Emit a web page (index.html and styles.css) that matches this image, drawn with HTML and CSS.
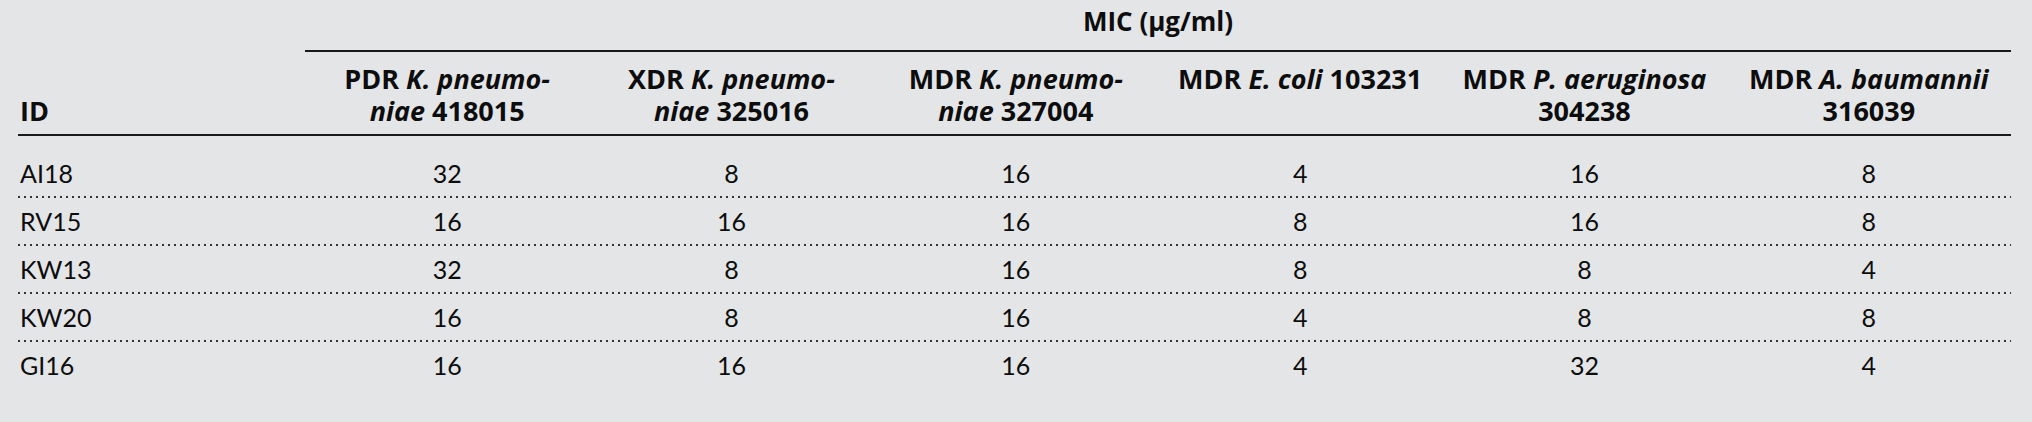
FILE: index.html
```html
<!DOCTYPE html>
<html>
  <head>
    <title>MIC table</title>
    <meta charset="utf-8">
    <link rel="stylesheet" href="styles.css">
  </head>
  <body>
  <div id="mictable">
    <div class="row head-top">
      <div class="cell"></div>
      <div class="cell span-title">MIC (μg/ml)</div>
    </div>
    <div class="row head-cols">
      <div class="cell id-head">ID</div>
      <div class="cell col-head">PDR <i>K. pneumo-</i><br><i>niae</i> 418015</div>
      <div class="cell col-head">XDR <i>K. pneumo-</i><br><i>niae</i> 325016</div>
      <div class="cell col-head">MDR <i>K. pneumo-</i><br><i>niae</i> 327004</div>
      <div class="cell col-head">MDR <i>E. coli</i> 103231</div>
      <div class="cell col-head">MDR <i>P. aeruginosa</i><br>304238</div>
      <div class="cell col-head">MDR <i>A. baumannii</i><br>316039</div>
    </div>
    <div class="body-rows">
      <div class="row data dotted">
        <div class="cell id">AI18</div>
        <div class="cell">32</div><div class="cell">8</div><div class="cell">16</div>
        <div class="cell">4</div><div class="cell">16</div><div class="cell">8</div>
      </div>
      <div class="row data dotted">
        <div class="cell id">RV15</div>
        <div class="cell">16</div><div class="cell">16</div><div class="cell">16</div>
        <div class="cell">8</div><div class="cell">16</div><div class="cell">8</div>
      </div>
      <div class="row data dotted">
        <div class="cell id">KW13</div>
        <div class="cell">32</div><div class="cell">8</div><div class="cell">16</div>
        <div class="cell">8</div><div class="cell">8</div><div class="cell">4</div>
      </div>
      <div class="row data dotted">
        <div class="cell id">KW20</div>
        <div class="cell">16</div><div class="cell">8</div><div class="cell">16</div>
        <div class="cell">4</div><div class="cell">8</div><div class="cell">8</div>
      </div>
      <div class="row data">
        <div class="cell id">GI16</div>
        <div class="cell">16</div><div class="cell">16</div><div class="cell">16</div>
        <div class="cell">4</div><div class="cell">32</div><div class="cell">4</div>
      </div>
    </div>
  </div>
  </body>
</html>
```

FILE: styles.css
```css
body{
  margin: 0;
  background: #e4e5e7;
  color: #0d0d0d;
  font-family: Lato, "Liberation Sans", sans-serif;
}

#mictable{
  width: 1993px;
  margin-left: 18px;
}

.row{
  display: grid;
  grid-template-columns: 287px repeat(6, 1fr);
}

.head-top{
  grid-template-columns: 287px 1fr;
}

.span-title{
  padding: 6px 0 14px;
  border-bottom: 2px solid #1a1a1a;
  text-align: center;
  font-family: "Open Sans", Lato, sans-serif;
  font-weight: bold;
  font-size: 26px;
  line-height: 30px;
}

.head-cols{
  border-bottom: 2px solid #1a1a1a;
  padding: 11px 0 7px;
  font-family: "Open Sans", Lato, sans-serif;
  font-weight: bold;
  font-size: 27px;
  line-height: 32px;
}

.col-head{
  text-align: center;
}

.id-head{
  align-self: end;
  padding-left: 2px;
}

.body-rows{
  padding-top: 14px;
}

.data{
  font-size: 25px;
  line-height: 30px;
  padding: 8px 0 10px;
}

.data .cell{
  text-align: center;
}

.data .id{
  text-align: left;
  padding-left: 2px;
}

.dotted{
  background: linear-gradient(to right, #333 2px, transparent 2px) left bottom / 6px 2px repeat-x;
}
```
